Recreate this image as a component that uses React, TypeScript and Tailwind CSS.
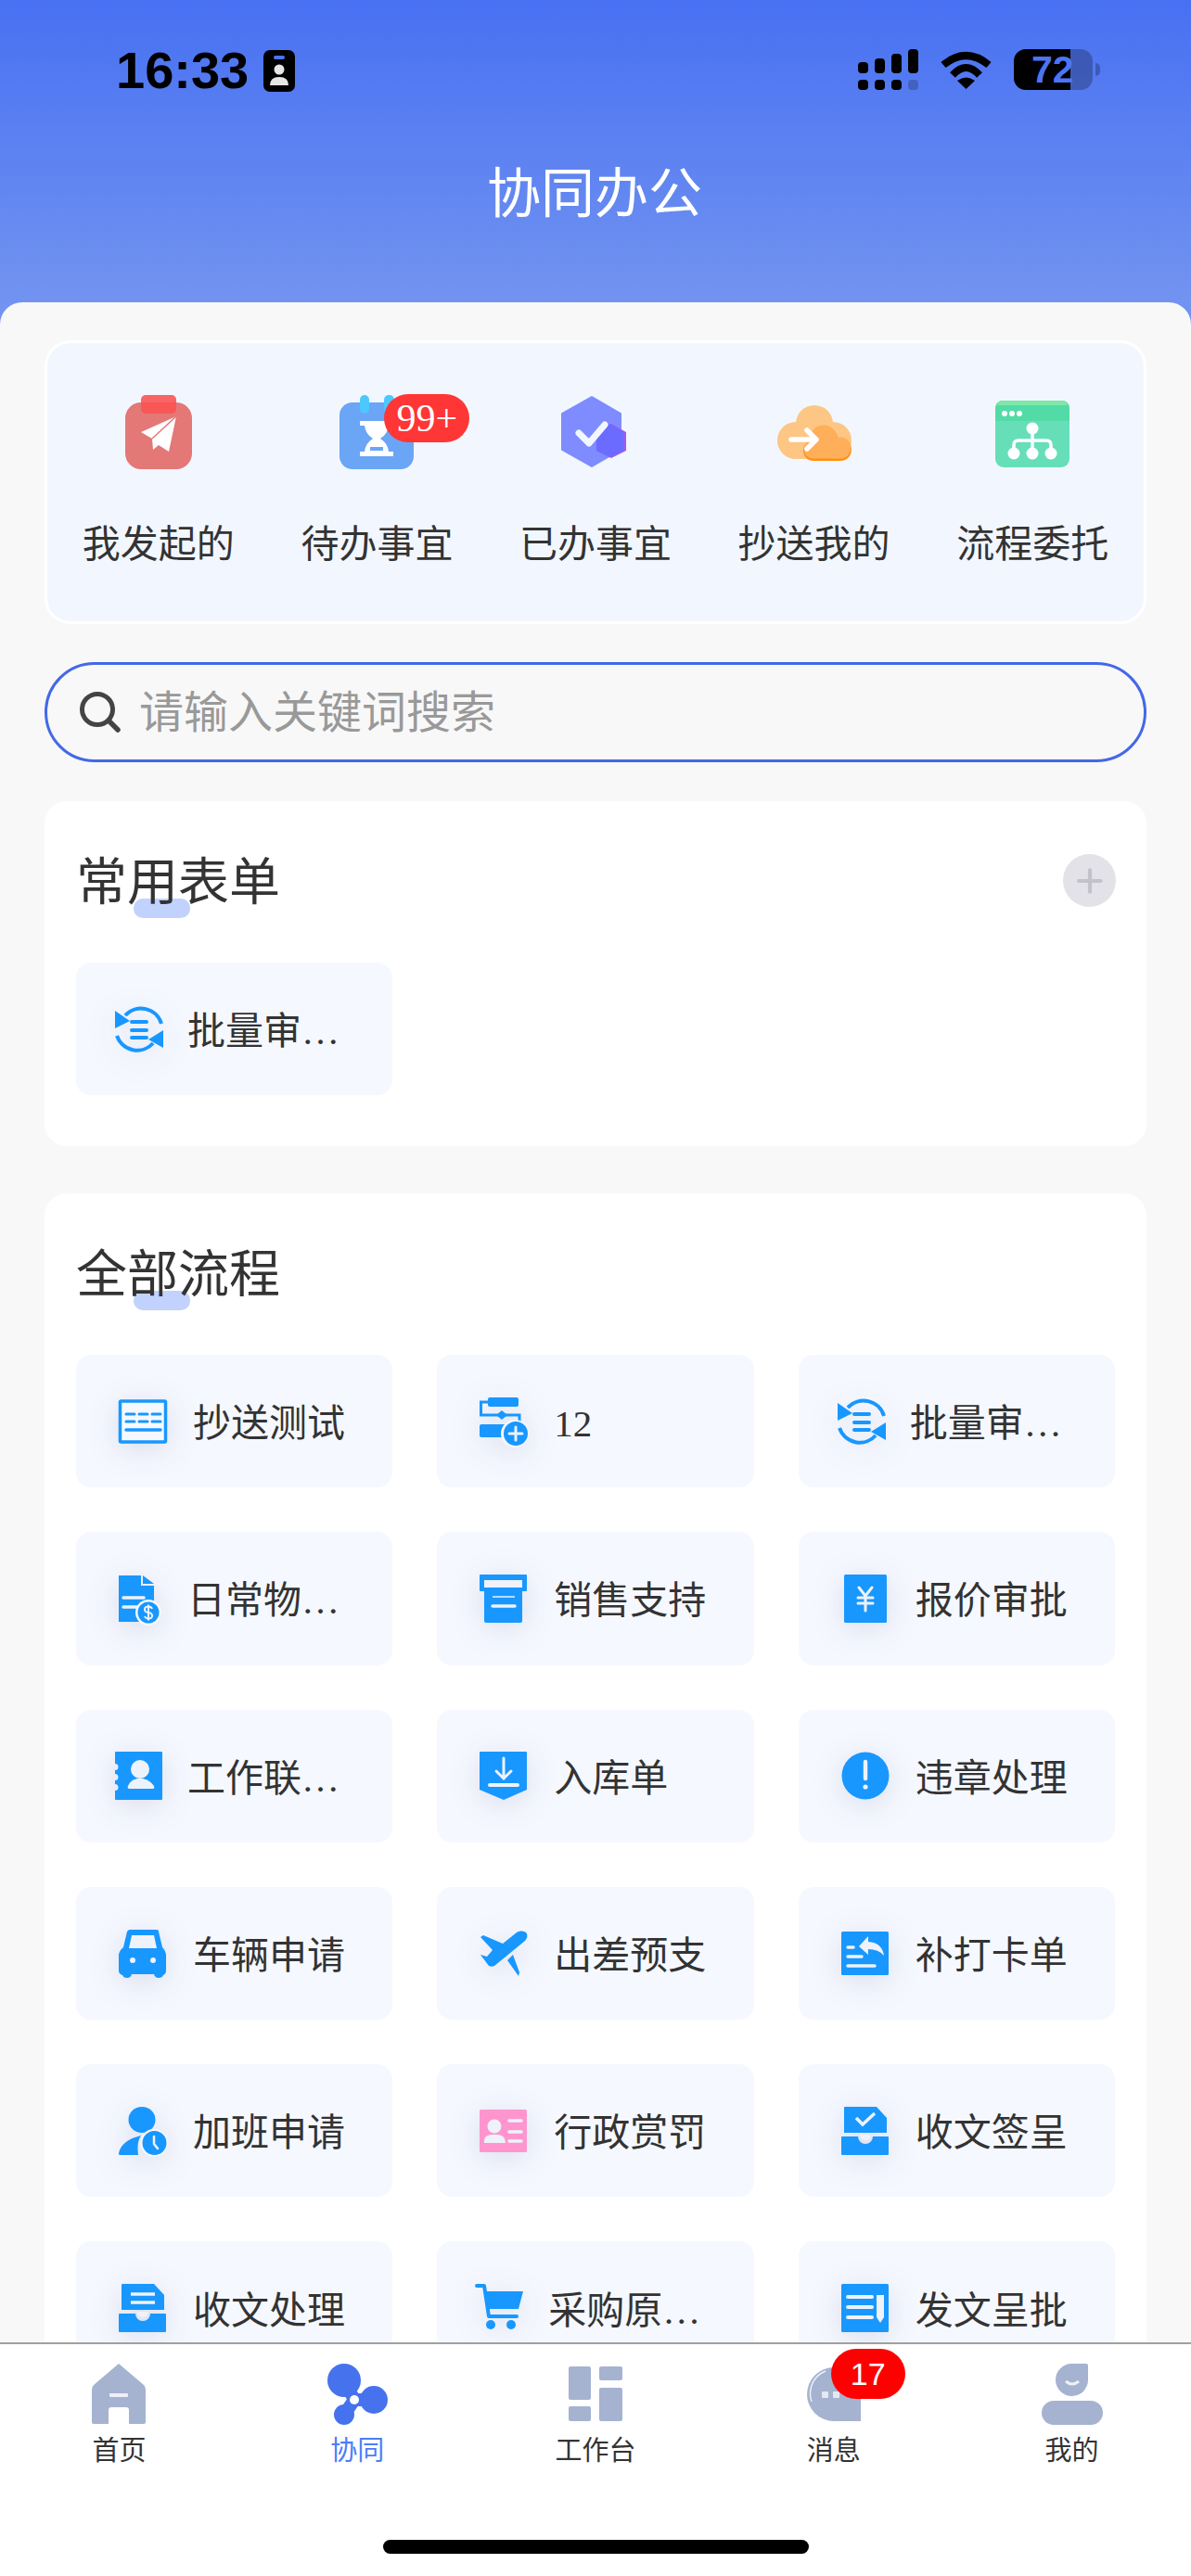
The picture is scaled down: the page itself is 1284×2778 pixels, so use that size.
import { ReactNode } from 'react'
import { Plus } from 'lucide-react'

const BLUE = '#1897ff'
const W = '#eef2fa'

const Ic = ({ children }: { children: ReactNode }) => (
  <svg
    viewBox="0 0 52 56"
    className="h-[56px] w-[52px] shrink-0 overflow-visible drop-shadow-[0_6px_16px_rgba(40,50,100,0.13)]"
  >
    {children}
  </svg>
)

const SyncIcon = () => (
  <Ic>
    <path d="M11 13A23 23 0 0 1 50 22" fill="none" stroke={BLUE} strokeWidth="4" />
    <path d="M0 8V27L16 19Z" fill={BLUE} />
    <path d="M2 35A23 23 0 0 0 41 43" fill="none" stroke={BLUE} strokeWidth="4" />
    <path d="M52 29V48L36 39Z" fill={BLUE} />
    <path d="M18 20H34M18 29H34M18 37H34" stroke={BLUE} strokeWidth="4" strokeLinecap="round" />
  </Ic>
)

const TrayDoc = ({ children }: { children: ReactNode }) => (
  <Ic>
    <path d="M4 2H38L49 14V30H3V3Q3 2 4 2Z" fill={BLUE} />
    <path d="M1 34H18A8 8 0 0 0 34 34H50Q51 34 51 35V53Q51 54 50 54H1Q0 54 0 53V35Q0 34 1 34Z" fill={BLUE} />
    <path d="M20 32H32A6 6 0 0 1 20 32Z" fill={W} />
    {children}
  </Ic>
)

const allItems: { label: string; icon: ReactNode; tight?: boolean }[] = [
  {
    label: '抄送测试',
    icon: (
      <Ic>
        <rect x="1.5" y="6" width="49" height="44" rx="1" fill="#f5f8ff" stroke={BLUE} strokeWidth="3.5" />
        <path d="M8 20H17M22 20H31M36 20H45M8 28H17M22 28H31M36 28H45" stroke={BLUE} strokeWidth="3" strokeLinecap="round" />
        <path d="M8 37H45" stroke={BLUE} strokeWidth="3.5" strokeLinecap="round" />
      </Ic>
    ),
  },
  {
    label: '12',
    icon: (
      <Ic>
        <rect x="9" y="2" width="33" height="10" rx="2" fill={BLUE} />
        <path d="M9 7H1.5V21H43V32" fill="none" stroke={BLUE} strokeWidth="3" />
        <path d="M24 16L30 21L24 26L18 21Z" fill={BLUE} />
        <rect x="0" y="31" width="34" height="14" rx="2" fill={BLUE} />
        <circle cx="38" cy="41" r="15" fill="#f5f8ff" />
        <circle cx="39" cy="41" r="13" fill={BLUE} />
        <path d="M39 34V48M32 41H46" stroke={W} strokeWidth="3" strokeLinecap="round" />
      </Ic>
    ),
  },
  { label: '批量审…', icon: <SyncIcon />, tight: true },
  {
    label: '日常物…',
    tight: true,
    icon: (
      <Ic>
        <path d="M4 3H28V14H42V43H4Z M4 43V53H40V43Z" fill={BLUE} />
        <path d="M30 3L42 12H30Z" fill={BLUE} />
        <path d="M9 27H31M9 37H26" stroke={W} strokeWidth="3.5" strokeLinecap="round" />
        <circle cx="36" cy="43" r="14" fill="#f5f8ff" />
        <circle cx="36" cy="43" r="11.5" fill={BLUE} />
        <path d="M40 39Q39 36.5 36 36.5Q32 36.5 32 39.5Q32 42.5 36 43Q40 43.5 40 46.5Q40 49.5 36 49.5Q33 49.5 32 47M36 34.5V51.5" fill="none" stroke={W} strokeWidth="2" />
      </Ic>
    ),
  },
  {
    label: '销售支持',
    icon: (
      <Ic>
        <path d="M1 2H50Q51 2 51 3V19Q51 20 50 20H46V52Q46 54 44 54H7Q5 54 5 52V20H1Q0 20 0 19V3Q0 2 1 2Z" fill={BLUE} />
        <rect x="5" y="8" width="41" height="8" fill={W} />
        <path d="M14 26H38" stroke={W} strokeWidth="1.5" />
        <path d="M14 36H38" stroke={W} strokeWidth="3.5" strokeLinecap="round" />
      </Ic>
    ),
  },
  {
    label: '报价审批',
    icon: (
      <Ic>
        <rect x="3" y="2" width="46" height="52" rx="1.5" fill={BLUE} />
        <path d="M19 16L26 25L33 16M18 27H34M18 33H34M26 25V41" fill="none" stroke={W} strokeWidth="3" strokeLinecap="round" />
      </Ic>
    ),
  },
  {
    label: '工作联…',
    tight: true,
    icon: (
      <Ic>
        <path d="M1 2H50Q51 2 51 3V53Q51 54 50 54H1Q0 54 0 53V44A3.5 3.5 0 0 0 0 37V33A3.5 3.5 0 0 0 0 26V22A3.5 3.5 0 0 0 0 15V3Q0 2 1 2Z" fill={BLUE} />
        <circle cx="27" cy="21" r="10" fill={W} />
        <path d="M15 42Q13 42 14 39Q16 33 24 31H30Q38 33 42 39Q43 42 41 42Z" fill={W} />
      </Ic>
    ),
  },
  {
    label: '入库单',
    icon: (
      <Ic>
        <path d="M1 2H50Q51 2 51 3V43L26 54L0 43V3Q0 2 1 2Z" fill={BLUE} />
        <path d="M26 9V31M18 23L26 31L34 23" fill="none" stroke={W} strokeWidth="3" strokeLinecap="round" />
        <path d="M11 38H41" stroke={W} strokeWidth="4" strokeLinecap="round" />
      </Ic>
    ),
  },
  {
    label: '违章处理',
    icon: (
      <Ic>
        <circle cx="26" cy="28" r="25.5" fill={BLUE} />
        <path d="M26 13V31" stroke={W} strokeWidth="4.5" strokeLinecap="round" />
        <circle cx="26" cy="40" r="2.6" fill={W} />
      </Ic>
    ),
  },
  {
    label: '车辆申请',
    icon: (
      <Ic>
        <path d="M12 2H41Q43 2 43 4L47 21Q51 25 51 30V46Q51 50 48 51Q47 54 43 54Q39 54 38 50H14Q13 54 9 54Q5 54 4 51Q0 50 0 46V30Q0 25 5 21L9 4Q10 2 12 2Z" fill={BLUE} />
        <path d="M14 8H38L41 22H11Z" fill={W} />
        <circle cx="15" cy="35" r="3" fill={W} />
        <circle cx="37" cy="35" r="3" fill={W} />
      </Ic>
    ),
  },
  {
    label: '出差预支',
    icon: (
      <Ic>
        <path d="M50 5C47 3 43 3 40 5L25 17L4 8L1 10L14 24L8 31L1 29L10 41C12 42 14 42 16 41L49 14C52 11 52 7 50 5Z" fill={BLUE} />
        <path d="M36 29L30 35L42 52L43 48Z" fill={BLUE} />
      </Ic>
    ),
  },
  {
    label: '补打卡单',
    icon: (
      <Ic>
        <rect x="0" y="4" width="51" height="47" rx="1.5" fill={BLUE} />
        <path d="M7 21H13M7 31H22M7 41H36" stroke={W} strokeWidth="3.5" strokeLinecap="round" />
        <path d="M19 20L29 9V15Q44 16 46 30Q40 23 29 23V29Z" fill={W} />
      </Ic>
    ),
  },
  {
    label: '加班申请',
    icon: (
      <Ic>
        <ellipse cx="25" cy="16" rx="14.5" ry="14" fill={BLUE} />
        <path d="M1 54Q0 54 0 52Q3 38 24 33Q19 40 21 54Z" fill={BLUE} />
        <circle cx="38" cy="41" r="15" fill="#f5f8ff" />
        <circle cx="38.5" cy="41" r="13" fill={BLUE} />
        <path d="M38 34V42L42 47" fill="none" stroke={W} strokeWidth="2.5" strokeLinecap="round" />
      </Ic>
    ),
  },
  {
    label: '行政赏罚',
    icon: (
      <Ic>
        <rect x="0" y="5" width="51" height="46" rx="1.5" fill="#ff95cf" />
        <circle cx="16" cy="23" r="7.5" fill={W} />
        <path d="M5 41Q4 33 12 32H20Q28 33 28 41Z" fill={W} />
        <path d="M32 17H45M32 29H45M32 39H45" stroke={W} strokeWidth="3.5" strokeLinecap="round" />
      </Ic>
    ),
  },
  {
    label: '收文签呈',
    icon: (
      <TrayDoc>
        <path d="M16 14L23 21L36 9" fill="none" stroke={W} strokeWidth="3.5" />
      </TrayDoc>
    ),
  },
  {
    label: '收文处理',
    icon: (
      <TrayDoc>
        <path d="M13 13H39M13 22H39" stroke={W} strokeWidth="3.5" />
      </TrayDoc>
    ),
  },
  {
    label: '采购原…',
    tight: true,
    icon: (
      <Ic>
        <path d="M1 4H9L14 37H44" fill="none" stroke={BLUE} strokeWidth="4" strokeLinecap="round" strokeLinejoin="round" />
        <path d="M11 10H51L46 29H14Z" fill={BLUE} />
        <circle cx="16" cy="46" r="5" fill={BLUE} />
        <circle cx="38" cy="46" r="5" fill={BLUE} />
      </Ic>
    ),
  },
  {
    label: '发文呈批',
    icon: (
      <Ic>
        <rect x="0" y="2" width="51" height="52" rx="1.5" fill={BLUE} />
        <path d="M7 16H33M7 27H33M7 38H33" stroke={W} strokeWidth="4" strokeLinecap="round" />
        <path d="M38 14H46V38L42 44L38 38Z" fill={W} />
      </Ic>
    ),
  },
]

const FormItem = ({ label, icon, tight }: { label: string; icon: ReactNode; tight?: boolean }) => (
  <div
    className={`flex h-[143.3px] items-center rounded-[16px] bg-[#f5f8ff] ${
      tight ? 'gap-[26px] pl-[42px]' : 'gap-[28px] pl-[46px]'
    }`}
  >
    {icon}
    <span className="whitespace-nowrap pt-[5px] text-[41px] leading-[48px] text-[#333]">{label}</span>
  </div>
)

const SectionTitle = ({ title }: { title: string }) => (
  <div className="relative h-[60px]">
    <div className="absolute left-[62px] top-[50px] h-[21px] w-[61px] rounded-[10px] bg-[#c0d2fd]" />
    <h2 className="relative pt-[3px] text-[55px] leading-[60px] text-[#333]">{title}</h2>
  </div>
)

const SentIcon = () => (
  <svg viewBox="0 0 80 80" className="h-20 w-20">
    <rect x="4" y="8" width="72" height="72" rx="17" fill="#e37876" />
    <rect x="21" y="0" width="38" height="20" rx="5" fill="#f95353" opacity="0.9" />
    <path d="M59 23L21 40L33 47L34 59L40 54L51 61Z" fill="#fff" />
    <path d="M59 23L33 47" stroke="#e37876" strokeWidth="1.5" />
  </svg>
)

const TodoIcon = () => (
  <svg viewBox="0 0 80 80" className="h-20 w-20">
    <rect x="0" y="8" width="80" height="72" rx="14" fill="#6aa5f6" />
    <rect x="22" y="0" width="10" height="20" rx="5" fill="#4cc8ff" />
    <rect x="48" y="0" width="11" height="20" rx="5" fill="#4cc8ff" />
    <path d="M22 28H58V33H53Q52 42 44 47Q52 52 53 61H58V66H22V61H27Q28 52 36 47Q28 42 27 33H22Z" fill="#fff" />
    <rect x="33" y="56" width="14" height="4" fill="#6aa5f6" />
  </svg>
)

const DoneIcon = () => (
  <svg viewBox="0 0 80 80" className="h-20 w-20">
    <path d="M36 2L67 20V59L36 77L4 59V20Z" fill="#7e8cff" stroke="#7e8cff" strokeWidth="2" strokeLinejoin="round" />
    <path d="M57 31L73 40V60L57 68L41 60V40Z" fill="#9a5cf5" />
    <path d="M55 31L70 40V60L55 67L41 60V40Z" fill="#6b6bff" />
    <path d="M22 41L33 52L50 32" fill="none" stroke="#f2f7ff" strokeWidth="7" strokeLinecap="round" strokeLinejoin="round" />
  </svg>
)

const CcIcon = () => (
  <svg viewBox="0 0 80 80" className="h-20 w-20">
    <g fill="#fdc684">
      <circle cx="40" cy="31" r="20" />
      <circle cx="20" cy="49" r="20" />
      <circle cx="60" cy="49" r="20" />
      <rect x="20" y="40" width="40" height="29" />
    </g>
    <g fill="#ff9110">
      <circle cx="50" cy="48" r="15" />
      <circle cx="39" cy="60" r="11" />
      <circle cx="68" cy="59" r="12" />
      <rect x="39" y="55" width="29" height="16" />
    </g>
    <g fill="#ffae5a">
      <circle cx="50" cy="47" r="14.5" />
      <circle cx="39" cy="58" r="10.5" />
      <circle cx="68" cy="57" r="11.5" />
      <rect x="39" y="52" width="29" height="16.5" />
    </g>
    <path d="M15 48H42M32 38L42 48L32 58" fill="none" stroke="#fff" strokeWidth="5.5" strokeLinecap="round" strokeLinejoin="round" />
  </svg>
)

const DelegateIcon = () => (
  <svg viewBox="0 0 80 80" className="h-20 w-20">
    <rect x="0" y="6" width="80" height="72" rx="9" fill="#66dfb9" />
    <path d="M0 15Q0 6 9 6H71Q80 6 80 15V28H0Z" fill="#52dba6" />
    <path d="M2 11Q3 6 9 6H71Q77 6 78 11Z" fill="#7de8a8" />
    <circle cx="10" cy="20" r="3" fill="#fff" />
    <circle cx="18" cy="20" r="3" fill="#fff" />
    <circle cx="26" cy="20" r="3" fill="#fff" />
    <path d="M40 36V62M20 62V54Q20 49 25 49H55Q60 49 60 54V62" fill="none" stroke="#fff" strokeWidth="3.5" />
    <circle cx="40" cy="36" r="6.5" fill="#fff" />
    <circle cx="20" cy="63" r="6.5" fill="#fff" />
    <circle cx="40" cy="63" r="6.5" fill="#fff" />
    <circle cx="60" cy="63" r="6.5" fill="#fff" />
  </svg>
)

const quickLinks: { label: string; icon: ReactNode; badge?: string }[] = [
  { label: '我发起的', icon: <SentIcon /> },
  { label: '待办事宜', icon: <TodoIcon />, badge: '99+' },
  { label: '已办事宜', icon: <DoneIcon /> },
  { label: '抄送我的', icon: <CcIcon /> },
  { label: '流程委托', icon: <DelegateIcon /> },
]

const TAB = '#a5b3d1'

const HomeTab = () => (
  <svg viewBox="0 0 58 66" className="h-[66px] w-[58px] blur-[0.7px]">
    <path d="M29 0L2 23Q0 25 0 28V63Q0 65 2 65H18V50Q18 47 21 47H37Q40 47 40 50V65H56Q58 65 58 63V28Q58 25 56 23Z" fill={TAB} />
    <rect x="19" y="32" width="20" height="4" rx="1" fill="#fff" opacity="0.8" />
  </svg>
)

const TeamTab = () => (
  <svg viewBox="0 0 70 68" className="h-[68px] w-[70px] blur-[0.7px]">
    <g fill="#4672ee">
      <circle cx="21" cy="19" r="18" />
      <circle cx="53" cy="40" r="15" />
      <circle cx="21" cy="56" r="11" />
    </g>
    <path d="M21 19L32 40L53 40M32 40L21 56" fill="none" stroke="#4672ee" strokeWidth="14" />
    <circle cx="32" cy="40" r="5" fill="#fff" />
  </svg>
)

const WorkTab = () => (
  <svg viewBox="0 0 58 60" className="h-[60px] w-[58px] blur-[0.7px]">
    <g fill={TAB}>
      <rect x="0" y="0" width="24" height="36" rx="2" />
      <rect x="0" y="43" width="24" height="16" rx="2" />
      <rect x="33" y="0" width="25" height="15" rx="2" />
      <rect x="33" y="23" width="25" height="36" rx="2" />
    </g>
  </svg>
)

const MessageTab = () => (
  <svg viewBox="0 0 58 60" className="h-[60px] w-[58px] blur-[0.7px]">
    <path d="M29 1A29 29 0 1 0 29 59H58V30A29 29 0 0 0 29 1Z" fill={TAB} />
    <path d="M5 38A26 26 0 0 1 20 5" fill="none" stroke="#fff" strokeWidth="1.5" opacity="0.8" />
    <rect x="16" y="27" width="7" height="7" rx="1" fill="#fff" opacity="0.7" />
    <rect x="28" y="27" width="7" height="7" rx="1" fill="#fff" opacity="0.7" />
  </svg>
)

const MineTab = () => (
  <svg viewBox="0 0 66 66" className="h-[66px] w-[66px] blur-[0.7px]">
    <path d="M33 0H48Q50 0 50 2V17A17.5 17.5 0 1 1 33 0Z" fill={TAB} />
    <path d="M26 19Q33 25 40 19" fill="none" stroke="#fff" strokeWidth="3" opacity="0.8" />
    <rect x="0" y="40" width="66" height="26" rx="13" fill={TAB} />
  </svg>
)

const tabs: { label: string; icon: ReactNode; active?: boolean; badge?: string }[] = [
  { label: '首页', icon: <HomeTab /> },
  { label: '协同', icon: <TeamTab />, active: true },
  { label: '工作台', icon: <WorkTab /> },
  { label: '消息', icon: <MessageTab />, badge: '17' },
  { label: '我的', icon: <MineTab /> },
]

const StatusBar = () => (
  <div className="flex h-[44px] items-center justify-between pl-[125px] pr-[98px] font-['Liberation_Sans',sans-serif] text-black">
    <div className="mt-[2px] flex items-center gap-[16px]">
      <span className="text-[56px] font-bold leading-none">16:33</span>
      <svg viewBox="0 0 34 45" className="h-[45px] w-[34px]">
        <rect width="34" height="45" rx="7" fill="#000" />
        <rect x="11" y="6" width="12" height="4" rx="2" fill="#4d74f2" />
        <circle cx="17" cy="21" r="5.5" fill="#fff" opacity="0.9" />
        <path d="M7 38Q7 29 17 29Q27 29 27 38Z" fill="#fff" opacity="0.9" />
      </svg>
    </div>
    <div className="flex items-center">
      <svg viewBox="0 0 65 44" className="h-[44px] w-[65px]">
        <g fill="#000">
          <rect x="0" y="14" width="11" height="12" rx="4" />
          <rect x="18" y="10" width="11" height="16" rx="4" />
          <rect x="36" y="5" width="11" height="21" rx="4" />
          <rect x="54" y="0" width="11" height="26" rx="4" />
          <rect x="0" y="33" width="11" height="11" rx="4" />
          <rect x="18" y="33" width="11" height="11" rx="4" />
          <rect x="36" y="33" width="11" height="11" rx="4" />
        </g>
        <rect x="54" y="33" width="11" height="11" rx="4" fill="#000" opacity="0.2" />
      </svg>
      <svg viewBox="0 0 57 41" className="ml-[23px] h-[41px] w-[57px]">
        <path d="M4 15Q28.5 -5 53 15M14 26Q28.5 10 43 26" fill="none" stroke="#000" strokeWidth="8" />
        <path d="M28.5 41L19 32Q28.5 25 38 32Z" fill="#000" />
      </svg>
      <div className="relative ml-[23px] h-[44px] w-[85px] overflow-hidden rounded-[13px] bg-black/25">
        <div className="h-full w-[61px] bg-black" />
        <span className="absolute left-[19px] top-[3px] text-[41px] font-bold leading-[38px] text-[#4d74f2]">72</span>
      </div>
      <div className="ml-[3px] h-[14px] w-[5px] rounded-r-full bg-black/25" />
    </div>
  </div>
)

const App = () => {
  return (
    <div className="flex h-[2778px] w-[1284px] flex-col overflow-hidden bg-[#7293f0] font-['Liberation_Serif','Noto_Sans_CJK_SC',serif]">
      <header className="h-[326px] shrink-0 bg-gradient-to-b from-[#4870f2] to-[#7293f0] pt-[53px]">
        <StatusBar />
        <h1 className="mt-[83px] pr-[2px] text-center text-[58px] leading-[60px] text-white">协同办公</h1>
      </header>

      <main className="min-h-0 flex-1 overflow-hidden rounded-t-[24px] bg-[#f8f8f8] px-[48px] pt-[41px]">
        <section className="grid h-[306px] grid-cols-5 rounded-[28px] border-[3px] border-white bg-[#f2f7ff] px-[2px] pt-[56px]">
          {quickLinks.map((link) => (
            <div key={link.label} className="flex flex-col items-center">
              <div className="relative h-20 w-20">
                {link.icon}
                {link.badge && (
                  <span className="absolute left-[48px] top-[-1px] flex h-[52px] w-[92px] items-center justify-center rounded-full bg-[#ff3636] text-[42px] leading-none text-white">
                    {link.badge}
                  </span>
                )}
              </div>
              <span className="mt-[57px] whitespace-nowrap text-[41px] leading-[48px] text-[#333]">{link.label}</span>
            </div>
          ))}
        </section>

        <div className="mt-[41px] flex h-[108px] items-center gap-[20px] rounded-full border-[3px] border-[#4368e8] bg-[#f8f8f8] px-[35px]">
          <svg viewBox="0 0 44 44" className="h-[44px] w-[44px] shrink-0">
            <circle cx="19" cy="19" r="16.5" fill="none" stroke="#444" strokeWidth="5" />
            <path d="M31 31L41 41" stroke="#444" strokeWidth="5.5" strokeLinecap="round" />
          </svg>
          <input
            placeholder="请输入关键词搜索"
            className="min-w-0 flex-1 bg-transparent pt-[2px] text-[48px] leading-[60px] outline-none placeholder:text-[#999]"
          />
        </div>

        <section className="relative mt-[42px] h-[372px] rounded-[24px] bg-white px-[34px] pt-[55px]">
          <SectionTitle title="常用表单" />
          <button className="absolute right-[33px] top-[57px] flex h-[57px] w-[57px] items-center justify-center rounded-full bg-[#e2e2e8] text-[#c2c2ca]">
            <Plus size={40} strokeWidth={2.5} />
          </button>
          <div className="mt-[59px] grid grid-cols-3 gap-x-[48px]">
            <FormItem label="批量审…" icon={<SyncIcon />} tight />
          </div>
        </section>

        <section className="mt-[51px] rounded-[24px] bg-white px-[34px] pb-[40px] pt-[55px]">
          <SectionTitle title="全部流程" />
          <div className="mt-[59px] grid grid-cols-3 gap-x-[48px] gap-y-[48px]">
            {allItems.map((item) => (
              <FormItem key={item.label} {...item} />
            ))}
          </div>
        </section>
      </main>

      <nav className="flex h-[252px] shrink-0 flex-col border-t-2 border-[#a0a0a0] bg-white">
        <div className="grid grid-cols-5">
          {tabs.map((tab) => (
            <div key={tab.label} className="flex flex-col items-center">
              <div className="relative mt-[20px] flex h-[68px] items-center">
                {tab.icon}
                {tab.badge && (
                  <span className="absolute left-[26px] top-[-15px] flex h-[54px] w-[80px] items-center justify-center rounded-full bg-[#ff0000] font-['Liberation_Sans',sans-serif] text-[34px] leading-none text-white">
                    {tab.badge}
                  </span>
                )}
              </div>
              <span className={`mt-[10px] text-[29px] leading-[34px] ${tab.active ? 'text-[#4a7df8]' : 'text-[#333]'}`}>
                {tab.label}
              </span>
            </div>
          ))}
        </div>
        <div className="mb-[24px] mt-auto h-[15px] w-[459px] self-center rounded-full bg-black" />
      </nav>
    </div>
  )
}

export default App
